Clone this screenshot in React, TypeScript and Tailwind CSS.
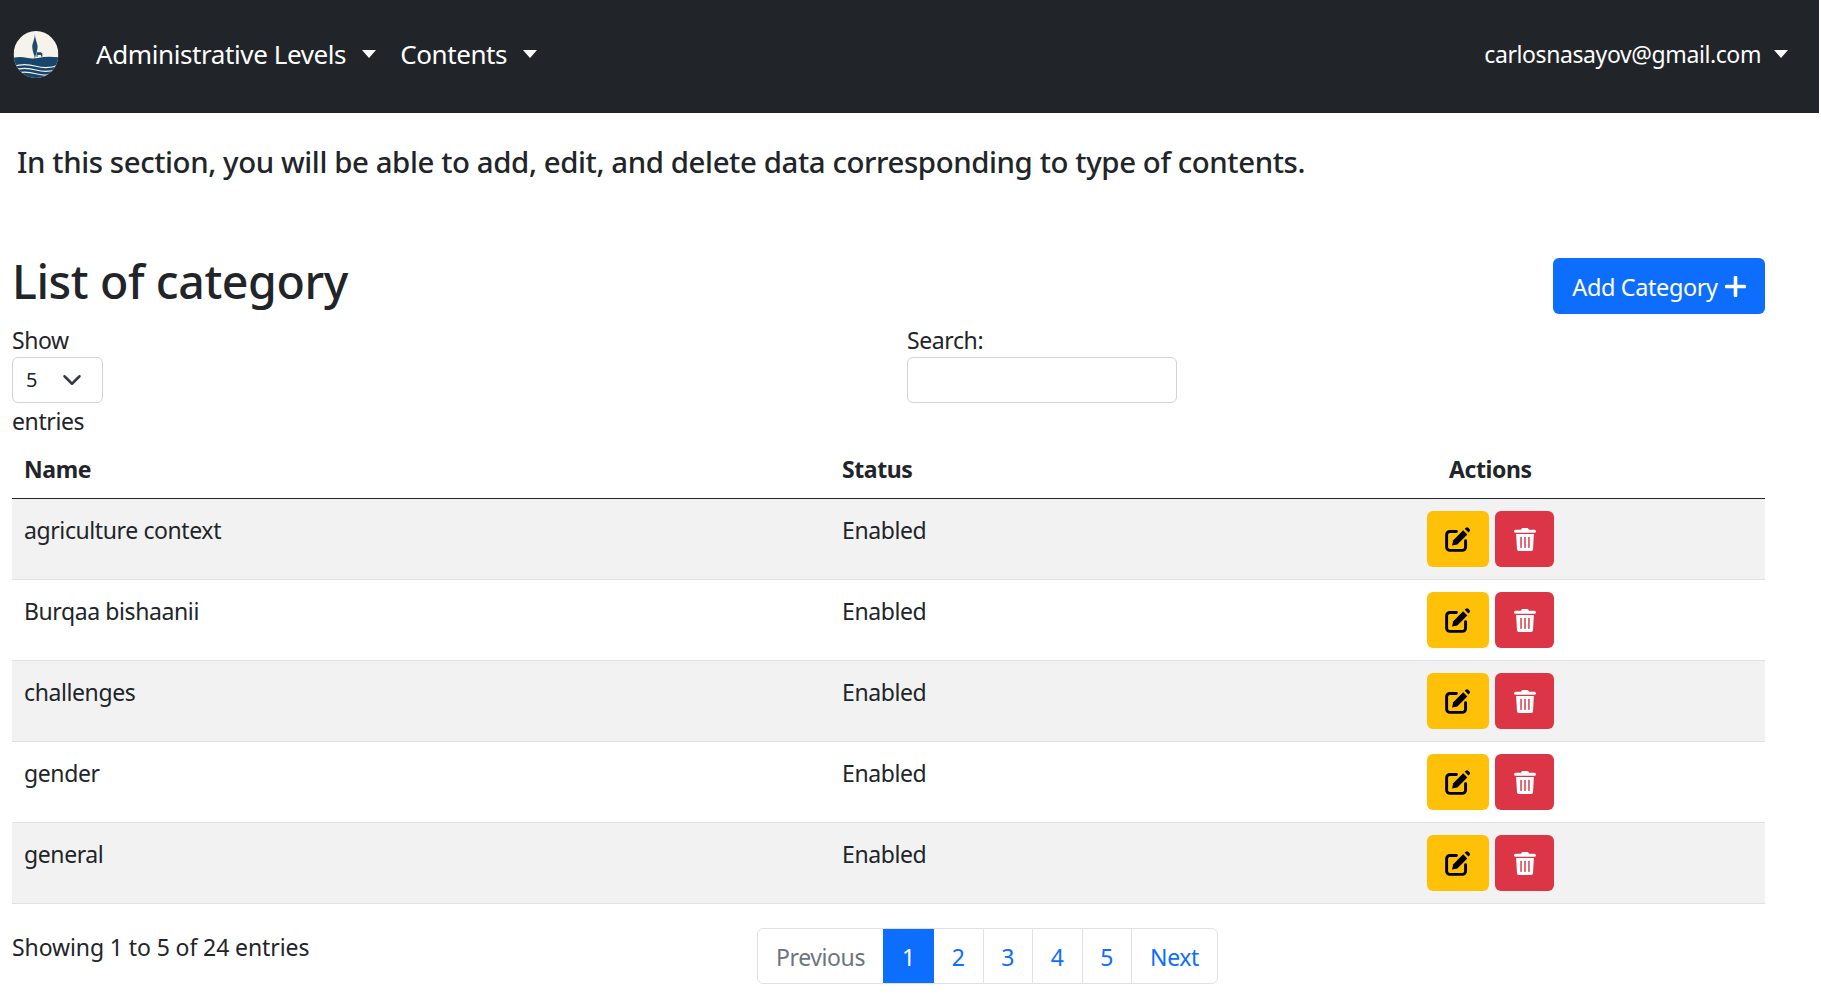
const rows = ['agriculture context', 'Burqaa bishaanii', 'challenges', 'gender', 'general'];
const pages = ['1', '2', '3', '4', '5'];

function Caret() {
  return <span className="ml-[16px] inline-block border-x-[7.5px] border-t-[8px] border-x-transparent border-t-white" />;
}

function Logo() {
  return (
    <svg viewBox="0 0 42 44" className="h-[47px] w-[48px]">
      <defs>
        <clipPath id="logo-clip">
          <ellipse cx="21" cy="22" rx="21" ry="22" />
        </clipPath>
      </defs>
      <g clipPath="url(#logo-clip)">
        <rect width="42" height="44" fill="#f7f3ea" />
        <path d="M20 2 C20 8 17.5 11 17.5 15 C17.5 19 19.5 22 20 26 C20.5 22 22.5 19 22.5 15 C22.5 11 20 8 20 2Z" fill="#1f4a6e" />
        <path d="M21.5 20 h4 l1.5 1 v3 h-1 l-.5-1.5 h-3 v1.5 h-1z" fill="#1f4a6e" />
        <path d="M0 25 Q6 23.5 12 25 T24 25 T42 24.5 V44 H0Z" fill="#17456b" />
        <path d="M0 33 Q10 30 21 33 T42 32" stroke="#f7f3ea" strokeWidth="1" fill="none" />
        <path d="M0 36.5 Q10 33.5 21 36.5 T42 35.5" stroke="#f7f3ea" strokeWidth="1" fill="none" />
        <path d="M0 40 Q10 37 21 40 T42 39" stroke="#f7f3ea" strokeWidth="1" fill="none" />
      </g>
    </svg>
  );
}

function EditIcon() {
  return (
    <svg viewBox="0 0 24 24" className="h-[26px] w-[26px]">
      <path d="M10.5 5 H4.5 a3 3 0 0 0-3 3 V19.5 a3 3 0 0 0 3 3 H16 a3 3 0 0 0 3-3 V13.5" fill="none" stroke="black" strokeWidth="2.7" strokeLinecap="round" />
      <path d="M6.5 18 L7.6 13.2 L16.8 4 L20.6 7.8 L11.4 17 Z" fill="black" />
      <path d="M18.2 2.6 l1-1 a1.6 1.6 0 0 1 2.2 0 l1.2 1.2 a1.6 1.6 0 0 1 0 2.2 l-1 1 z" fill="black" />
    </svg>
  );
}

function TrashIcon() {
  return (
    <svg viewBox="0 0 21 23" className="h-[24px] w-[22px]">
      <path d="M6.5 3 L7.6 1 h5.8 l1.1 2z" fill="white" />
      <rect x="0" y="2.6" width="21" height="3" rx="1.5" fill="white" />
      <path d="M2 6.8 h17 l-.8 14.4 a1.8 1.8 0 0 1-1.8 1.8 h-11.8 a1.8 1.8 0 0 1-1.8-1.8z" fill="white" />
      <rect x="6" y="9.5" width="1.4" height="10.5" fill="#dc3545" />
      <rect x="9.8" y="9.5" width="1.4" height="10.5" fill="#dc3545" />
      <rect x="13.6" y="9.5" width="1.4" height="10.5" fill="#dc3545" />
    </svg>
  );
}

export default function App() {
  return (
    <div className="min-h-screen bg-white text-[23px] leading-[34px] tracking-[-0.4px] text-[#212529] [font-family:'Noto_Sans',sans-serif]">
      {/* Navbar */}
      <nav className="flex h-[113px] w-[1819px] items-center justify-between bg-[#212529] pb-[5px] pl-[12px] pr-[31px] text-white">
        <div className="flex items-center">
          <Logo />
          <a className="ml-[36px] flex items-center text-[26px]">Administrative Levels<Caret /></a>
          <a className="ml-[24px] flex items-center text-[26px]">Contents<Caret /></a>
        </div>
        <a className="flex items-center">
          carlosnasayov@gmail.com
          <span className="ml-[13px] inline-block border-x-[7.5px] border-t-[8px] border-x-transparent border-t-white" />
        </a>
      </nav>

      <div className="px-[12px]">
        <p className="mt-[29px] pl-[5px] text-[29.4px] font-medium leading-[40px]">
          In this section, you will be able to add, edit, and delete data corresponding to type of contents.
        </p>

        <div className="w-[1753px]">
          <div className="mt-[69px] flex items-start justify-between">
            <h1 className="mt-[2px] text-[46.5px] font-medium leading-[56px]">List of category</h1>
            <button className="mt-[7px] flex h-[56px] w-[212px] items-center justify-center gap-[7px] rounded-[6px] bg-[#0d6efd] pt-[1px] text-[23.5px] text-white">
              Add Category
              <svg viewBox="0 0 21 21" className="h-[21px] w-[21px]">
                <path d="M10.5 1.5v18M1.5 10.5h18" stroke="white" strokeWidth="3.6" strokeLinecap="round" />
              </svg>
            </button>
          </div>

          <div className="mt-[9px] flex">
            <div className="w-[895px]">
              <div className="h-[34px]">Show</div>
              <div className="flex h-[46px] w-[91px] items-center justify-between rounded-[6px] border border-[#ced4da] pl-[13px] pr-[20px] text-[20px]">
                5
                <svg viewBox="0 0 16 16" className="h-[20px] w-[20px]">
                  <path d="M2 5l6 6 6-6" fill="none" stroke="#343a40" strokeWidth="2" strokeLinecap="round" strokeLinejoin="round" />
                </svg>
              </div>
              <div className="mt-[1px] h-[34px]">entries</div>
            </div>
            <div>
              <div className="h-[34px]">Search:</div>
              <div className="h-[46px] w-[270px] rounded-[6px] border border-[#ced4da]" />
            </div>
          </div>

          <table className="mt-[2px] w-full table-fixed border-collapse">
            <thead>
              <tr className="h-[58px] border-b-[1.5px] border-[#212529] text-left">
                <th className="w-[818px] px-[12px] font-bold">Name</th>
                <th className="w-[585px] px-[12px] font-bold">Status</th>
                <th className="pl-[34px] font-bold">Actions</th>
              </tr>
            </thead>
            <tbody>
              {rows.map((name, i) => (
                <tr key={name} className={`h-[81px] border-b border-[#dee2e6] ${i % 2 === 0 ? 'bg-[#f2f2f2]' : 'bg-white'}`}>
                  <td className="px-[12px] pb-[10px] pt-[14px] align-top">{name}</td>
                  <td className="px-[12px] pb-[10px] pt-[14px] align-top">Enabled</td>
                  <td className="align-middle">
                    <div className="flex gap-[6px] pl-[12px]">
                      <button className="flex h-[56px] w-[62px] items-center justify-center rounded-[6px] bg-[#ffc107]">
                        <EditIcon />
                      </button>
                      <button className="flex h-[56px] w-[59px] items-center justify-center rounded-[6px] bg-[#dc3545]">
                        <TrashIcon />
                      </button>
                    </div>
                  </td>
                </tr>
              ))}
            </tbody>
          </table>

          <div className="mt-[24px] flex items-start">
            <div className="mt-[2px] w-[745px] tracking-[-0.1px]">Showing 1 to 5 of 24 entries</div>
            <div className="flex h-[56px] overflow-hidden rounded-[6px] border border-[#dee2e6] pt-0 leading-[36px]">
              <span className="flex w-[125px] items-center justify-center pt-[2px] text-[#6c757d]">Previous</span>
              <span className="flex w-[51px] items-center justify-center bg-[#0d6efd] pt-[2px] text-white">{pages[0]}</span>
              {pages.slice(1).map((p) => (
                <span key={p} className="flex w-[49.5px] items-center justify-center border-r border-[#dee2e6] pt-[2px] text-[#0d6efd]">{p}</span>
              ))}
              <span className="flex w-[85px] items-center justify-center pt-[2px] text-[#0d6efd]">Next</span>
            </div>
          </div>
        </div>
      </div>
    </div>
  );
}
